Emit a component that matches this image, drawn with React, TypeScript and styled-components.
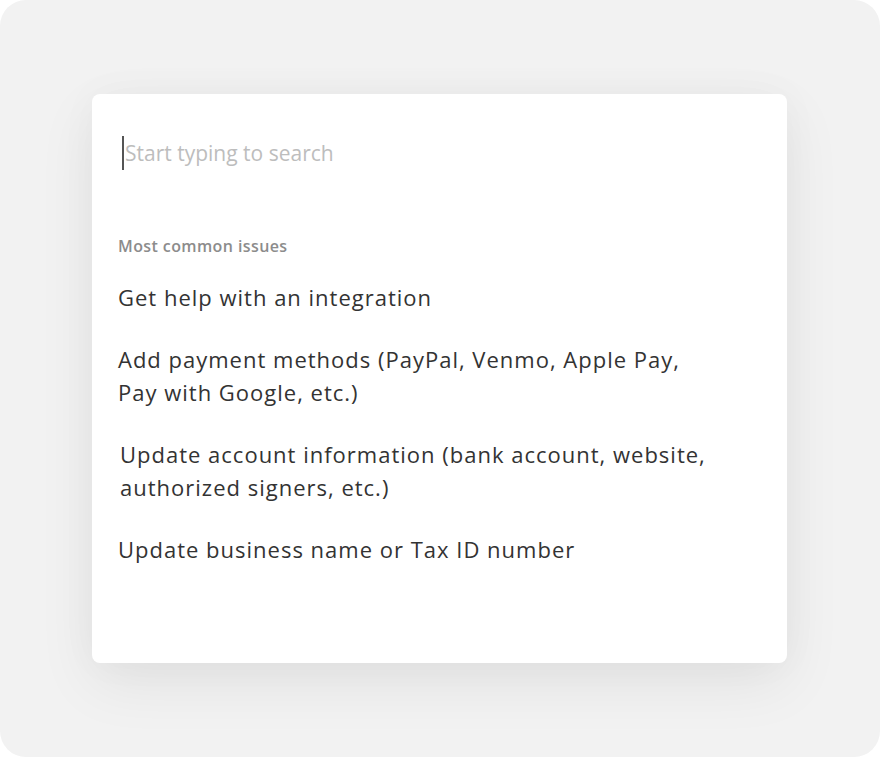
import React from "react";
import styled, { createGlobalStyle } from "styled-components";

const Global = createGlobalStyle`
  html, body { margin: 0; padding: 0; background: #ffffff; }
  * { box-sizing: border-box; }
`;

const Frame = styled.div`
  width: 880px;
  height: 757px;
  background: #f2f2f2;
  border-radius: 26px;
  padding: 94px 0 0 92px;
  font-family: "Open Sans", "Lato", sans-serif;
`;

const Card = styled.div`
  width: 695px;
  height: 569px;
  background: #ffffff;
  border-radius: 8px;
  box-shadow: 0 20px 60px rgba(0, 0, 0, 0.07), 0 0 40px rgba(0, 0, 0, 0.03);
  padding: 42px 0 0 26px;
  display: flex;
  flex-direction: column;
`;

const Search = styled.div`
  display: flex;
  align-items: center;
  height: 34px;
  padding-left: 4px;
`;

const Caret = styled.span`
  width: 2px;
  height: 34px;
  background: #555;
  margin-right: 1px;
`;

const Placeholder = styled.span`
  font-size: 21px;
  color: #bdbdbd;
  line-height: 34px;
`;

const SectionLabel = styled.div`
  margin-top: 66px;
  font-size: 16px;
  font-weight: 600;
  letter-spacing: 0.4px;
  color: #8c8c8c;
  line-height: 20px;
`;

const List = styled.div`
  display: flex;
  flex-direction: column;
  margin-top: 25px;
  gap: 29px;
`;

const Item = styled.div<{ $shift?: number }>`
  font-size: 22px;
  letter-spacing: 1px;
  line-height: 33px;
  color: #333333;
  padding-left: ${(p) => p.$shift ?? 0}px;
  max-width: 600px;
`;

const items: { text: string; shift: number }[] = [
  { text: "Get help with an integration", shift: 0 },
  { text: "Add payment methods (PayPal, Venmo, Apple Pay, Pay with Google, etc.)", shift: 0 },
  { text: "Update account information (bank account, website, authorized signers, etc.)", shift: 2 },
  { text: "Update business name or Tax ID number", shift: -1 },
];

export default function App() {
  return (
    <>
      <Global />
      <Frame>
        <Card>
          <Search>
            <Caret />
            <Placeholder>Start typing to search</Placeholder>
          </Search>
          <SectionLabel>Most common issues</SectionLabel>
          <List>
            {items.map((it) => (
              <Item key={it.text} $shift={it.shift}>
                {it.text}
              </Item>
            ))}
          </List>
        </Card>
      </Frame>
    </>
  );
}
